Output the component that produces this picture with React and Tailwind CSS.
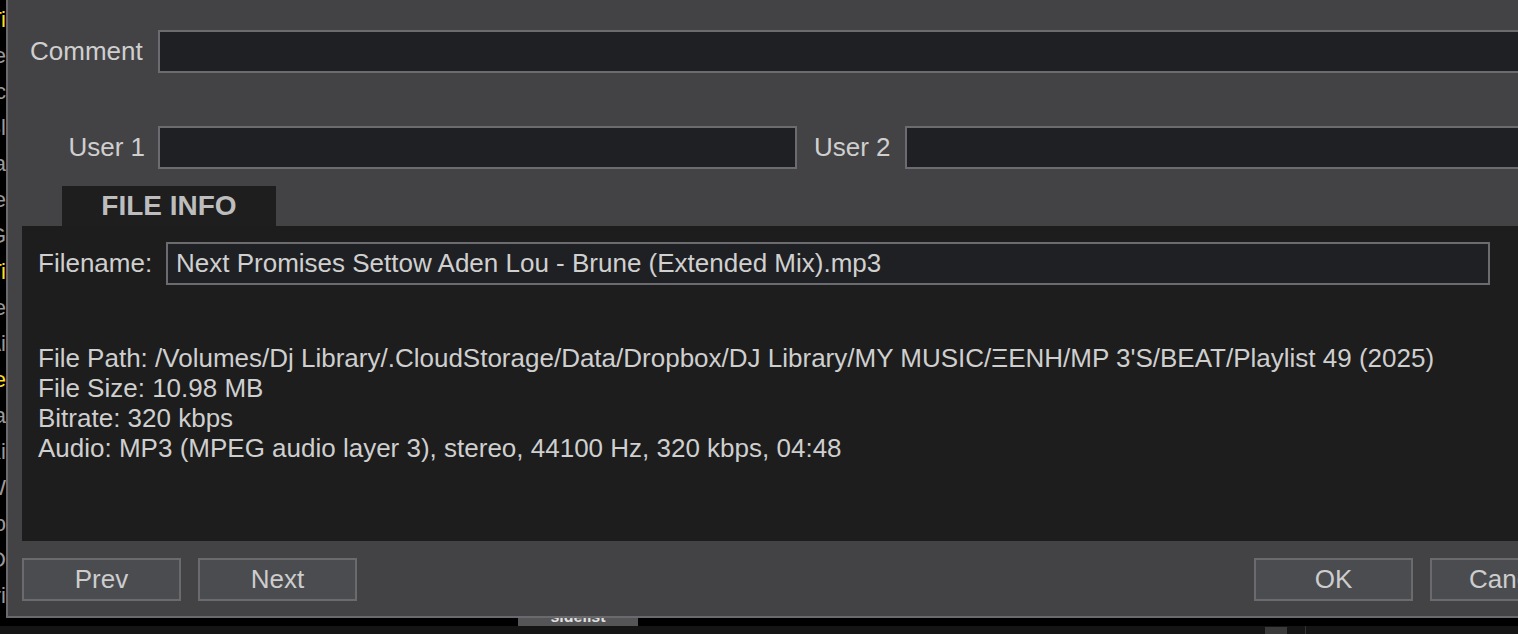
const font = { fontFamily: '"Liberation Sans", Arial, Helvetica, sans-serif' };

const strip = [
  ['Ti', 'text-yellow-300'], ['Te', 'text-[#9a9a9a]'], ['Sc', 'text-[#9a9a9a]'], ['Bl', 'text-[#9a9a9a]'],
  ['a', 'text-[#9a9a9a]'], ['Te', 'text-[#9a9a9a]'], ['G', 'text-[#9a9a9a]'], ['Ti', 'text-yellow-300'],
  ['e', 'text-[#9a9a9a]'], ['Ai', 'text-[#9a9a9a]'], ['e', 'text-yellow-300'], ['Sa', 'text-[#9a9a9a]'],
  ['Ki', 'text-[#9a9a9a]'], ['W', 'text-[#9a9a9a]'], ['Yo', 'text-[#9a9a9a]'], ['D', 'text-[#9a9a9a]'],
  ['ri', 'text-[#9a9a9a]'],
];

function Field({ className = '', children }) {
  return (
    <div className={`h-[43px] border-2 border-[#6b6b70] bg-[#1f2023] text-[#d0d0d0] flex items-center px-[7px] ${className}`}>
      {children}
    </div>
  );
}

function Button({ children }) {
  return (
    <button className="w-[159px] h-[43px] shrink-0 border-2 border-[#6a6a6f] bg-[#4b4c50] text-[26px] text-[#cdcdcd] flex items-center justify-center">
      {children}
    </button>
  );
}

export default function App() {
  return (
    <div className="w-[1518px] h-[634px] bg-black overflow-hidden flex flex-col" style={font}>
      <div className="flex h-[618px] shrink-0">
        {/* list behind the dialog */}
        <div className="w-[6px] shrink-0 overflow-hidden flex flex-col items-end pt-[2px]">
          {strip.map(([t, c], i) => (
            <div key={i} className={`text-[22px] leading-[36px] whitespace-nowrap ${c}`}>{t}</div>
          ))}
        </div>

        {/* dialog */}
        <div className="w-[1700px] shrink-0 bg-[#434345] border-l-2 border-b-2 border-[#6a6a6e] flex flex-col text-[#cfcfcf]">
          <div className="flex items-center mt-[30px]">
            <div className="w-[150px] pl-[22px] text-[26px]">Comment</div>
            <Field className="w-[1450px]" />
          </div>

          <div className="flex items-center mt-[53px]">
            <div className="w-[150px] pr-[13px] text-right text-[26px]">User 1</div>
            <Field className="w-[639px]" />
            <div className="w-[108px] pl-[17px] text-[26px]">User 2</div>
            <Field className="w-[700px]" />
          </div>

          <div className="ml-[54px] mt-[17px] w-[214px] h-[40px] bg-[#1e1e1e] flex items-center justify-center font-bold text-[28px] text-[#bdbdbd]">
            FILE INFO
          </div>
          <div className="ml-[14px] w-[1600px] h-[315px] bg-[#1d1d1d] px-[16px] pt-[16px]">
            <div className="flex items-center">
              <div className="w-[128px] text-[26px]">Filename:</div>
              <Field className="w-[1324px] text-[26px] px-[8px]">
                Next Promises Settow Aden Lou - Brune (Extended Mix).mp3
              </Field>
            </div>
            <div className="mt-[58px] text-[26px] leading-[30px] text-[#cfcfcf]">
              <div>File Path: /Volumes/Dj Library/.CloudStorage/Data/Dropbox/DJ Library/MY MUSIC/ΞΕΝΗ/MP 3'S/BEAT/Playlist 49 (2025)</div>
              <div>File Size: 10.98 MB</div>
              <div>Bitrate: 320 kbps</div>
              <div>Audio: MP3 (MPEG audio layer 3), stereo, 44100 Hz, 320 kbps, 04:48</div>
            </div>
          </div>

          <div className="flex mt-[17px] ml-[14px] w-[1580px]">
            <div className="flex gap-[17px]">
              <Button>Prev</Button>
              <Button>Next</Button>
            </div>
            <div className="flex gap-[17px] ml-[897px]">
              <Button>OK</Button>
              <Button>Cancel</Button>
            </div>
          </div>
        </div>
      </div>

      {/* area below the dialog */}
      <div className="h-[8px] shrink-0 bg-black relative flex">
        <div className="ml-[518px] w-[120px] h-[8px] bg-[#555557] overflow-hidden flex justify-center">
          <span className="text-[16px] font-bold leading-[16px] -mt-[9px] text-[#e0e0e0]">sidelist</span>
        </div>
      </div>
      <div className="flex-1 bg-[#151515] flex">
        <div className="ml-[1265px] mt-[1px] w-[22px] bg-[#3a3a3a]" />
        <div className="ml-[18px] w-[1px] bg-[#333]" />
      </div>
    </div>
  );
}
